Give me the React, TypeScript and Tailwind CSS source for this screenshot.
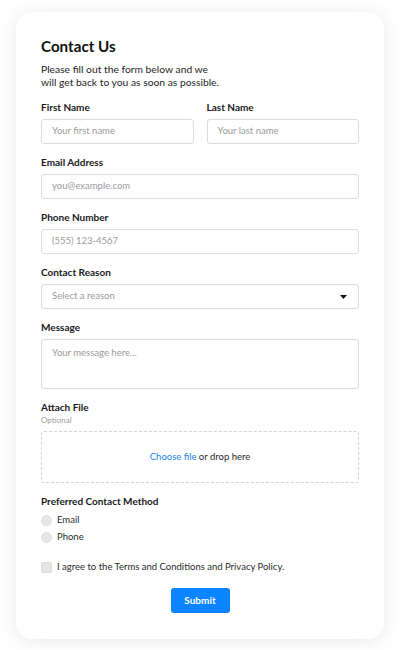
import React from "react";

const font = { fontFamily: "Lato, 'Noto Sans', sans-serif" };

function Label({ children }: { children: React.ReactNode }) {
  return <div className="text-[10px] leading-[12px] font-bold text-[#1a1a1a]">{children}</div>;
}

function Input({ placeholder }: { placeholder: string }) {
  return (
    <div className="mt-[6px] h-[25px] rounded-[3px] border border-[#dcdcdc] bg-white flex items-center pl-[10px] text-[9.5px] text-[#9b9b9b]">
      {placeholder}
    </div>
  );
}

export default function App() {
  return (
    <div className="min-h-[650px] bg-white px-[16px] pt-[12px] pb-[12px]" style={font}>
      <div className="rounded-[16px] bg-white shadow-[0_2px_18px_rgba(0,0,0,0.09)] px-[25px] pt-[24px] pb-[26px]">
        <div className="text-[15.2px] leading-[20px] font-bold text-[#111]">Contact Us</div>
        <div className="mt-[7px] w-[182px] text-[10.3px] leading-[13px] text-[#262626]">
          Please fill out the form below and we will get back to you as soon as possible.
        </div>

        <div className="mt-[12px] grid grid-cols-2 gap-x-[13px]">
          <div>
            <Label>First Name</Label>
            <Input placeholder="Your first name" />
          </div>
          <div>
            <Label>Last Name</Label>
            <Input placeholder="Your last name" />
          </div>
        </div>

        <div className="mt-[12px]">
          <Label>Email Address</Label>
          <Input placeholder="you@example.com" />
        </div>

        <div className="mt-[12px]">
          <Label>Phone Number</Label>
          <Input placeholder="(555) 123-4567" />
        </div>

        <div className="mt-[12px]">
          <Label>Contact Reason</Label>
          <div className="mt-[6px] h-[25px] rounded-[3px] border border-[#dcdcdc] bg-white flex items-center justify-between pl-[10px] pr-[11px] text-[9.5px] text-[#9b9b9b]">
            <span>Select a reason</span>
            <svg width="7" height="4" viewBox="0 0 7 4">
              <path d="M0 0 L7 0 L3.5 4 Z" fill="#111" />
            </svg>
          </div>
        </div>

        <div className="mt-[12px]">
          <Label>Message</Label>
          <div className="mt-[6px] h-[50px] rounded-[3px] border border-[#dcdcdc] bg-white pl-[10px] pt-[6px] text-[9.5px] leading-[13px] text-[#9b9b9b]">
            Your message here...
          </div>
        </div>

        <div className="mt-[12px]">
          <Label>Attach File</Label>
          <div className="mt-[1px] text-[8px] leading-[12px] text-[#9b9b9b]">Optional</div>
          <div className="mt-[5px] h-[52px] rounded-[3px] border border-dashed border-[#d4d4d4] flex items-center justify-center text-[9.5px] text-[#2a2a2a]">
            <span className="text-[#1a86f0]">Choose file</span>
            <span>&nbsp;or drop here</span>
          </div>
        </div>

        <div className="mt-[12px]">
          <Label>Preferred Contact Method</Label>
          <div className="mt-[5px]">
            <div className="h-[17px] flex items-center gap-[5px] text-[9.5px] text-[#2a2a2a]">
              <span className="w-[11px] h-[11px] rounded-full bg-[#e6e6e6] border border-[#dedede]" />
              <span>Email</span>
            </div>
            <div className="h-[17px] flex items-center gap-[5px] text-[9.5px] text-[#2a2a2a]">
              <span className="w-[11px] h-[11px] rounded-full bg-[#e6e6e6] border border-[#dedede]" />
              <span>Phone</span>
            </div>
          </div>
        </div>

        <div className="mt-[13px] h-[17px] flex items-center gap-[5px] text-[9.5px] text-[#2a2a2a]">
          <span className="w-[11px] h-[11px] rounded-[2px] bg-[#e6e6e6] border border-[#dedede]" />
          <span>I agree to the Terms and Conditions and Privacy Policy.</span>
        </div>

        <div className="mt-[12px] flex justify-center">
          <div className="w-[59px] h-[25px] rounded-[3px] bg-[#0a84ff] text-white text-[10px] font-bold flex items-center justify-center">
            Submit
          </div>
        </div>
      </div>
    </div>
  );
}
